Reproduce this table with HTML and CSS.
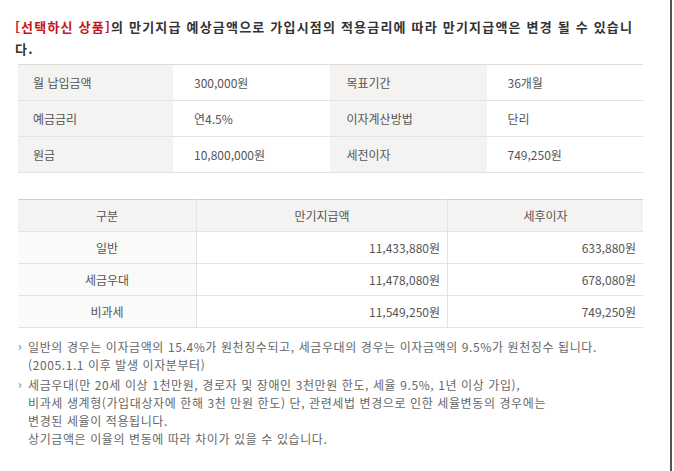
FILE: index.html
```html
<!DOCTYPE html>
<html lang="ko">
<head>
<meta charset="utf-8">
<link rel="stylesheet" href="styles.css">
</head>
<body>
<div class="frame">
  <p class="intro"><span class="hl">[선택하신 상품]</span>의 만기지급 예상금액으로 가입시점의 적용금리에 따라 만기지급액은 변경 될 수 있습니다.</p>

  <table class="summary">
    <tr>
      <th>월 납입금액</th><td>300,000원</td>
      <th>목표기간</th><td>36개월</td>
    </tr>
    <tr>
      <th>예금금리</th><td>연4.5%</td>
      <th>이자계산방법</th><td>단리</td>
    </tr>
    <tr>
      <th>원금</th><td>10,800,000원</td>
      <th>세전이자</th><td>749,250원</td>
    </tr>
  </table>

  <table class="result">
    <thead>
      <tr><th class="c1">구분</th><th class="c2">만기지급액</th><th class="c3">세후이자</th></tr>
    </thead>
    <tbody>
      <tr><th>일반</th><td>11,433,880원</td><td>633,880원</td></tr>
      <tr><th>세금우대</th><td>11,478,080원</td><td>678,080원</td></tr>
      <tr><th>비과세</th><td>11,549,250원</td><td>749,250원</td></tr>
    </tbody>
  </table>

  <ul class="notes">
    <li>일반의 경우는 이자금액의 15.4%가 원천징수되고, 세금우대의 경우는 이자금액의 9.5%가 원천징수 됩니다.<br>(2005.1.1 이후 발생 이자분부터)</li>
    <li>세금우대(만 20세 이상 1천만원, 경로자 및 장애인 3천만원 한도, 세율 9.5%, 1년 이상 가입),<br>비과세 생계형(가입대상자에 한해 3천 만원 한도) 단, 관련세법 변경으로 인한 세율변동의 경우에는<br>변경된 세율이 적용됩니다.<br>상기금액은 이율의 변동에 따라 차이가 있을 수 있습니다.</li>
  </ul>
</div>
</body>
</html>
```

FILE: styles.css
```css
html, body {
  margin: 0;
  padding: 0;
  background: #fff;
}
body {
  font-family: "Noto Sans CJK KR", "Noto Sans", sans-serif;
  color: #555;
  font-size: 12px;
}
.frame {
  width: 672px;
  height: 471px;
  border-right: 2px solid #57524d;
  box-sizing: border-box;
  padding-top: 16px;
  overflow: hidden;
}
.intro {
  margin: 0 0 0 15px;
  width: 628px;
  font-size: 13px;
  font-weight: bold;
  line-height: 22px;
  color: #333;
  letter-spacing: 1.2px;
}
.hl {
  color: #c4161c;
}
table {
  border-collapse: collapse;
  margin-left: 18px;
  width: 625px;
  table-layout: fixed;
}
.summary {
  margin-top: 4px;
  border-top: 1px solid #dcdcdc;
  border-bottom: 1px solid #cfcfcf;
}
.summary th, .summary td {
  height: 35px;
  padding: 0;
  border-bottom: 1px solid #e3e3e3;
  font-weight: normal;
  text-align: left;
  color: #555;
}
.summary th {
  width: 155px;
  background: #f4f3f1;
  padding-left: 15px;
}
.summary td {
  padding-left: 21px;
  background: #fff;
}
.summary th:first-child { width: 140px; }
.summary th:nth-child(3) { width: 140px; padding-left: 17px; }

.result {
  margin-top: 26px;
  border-top: 1px solid #cfcfcf;
  border-bottom: 1px solid #dcdcdc;
}
.result th, .result td {
  height: 31px;
  padding: 0;
  border-bottom: 1px solid #e3e3e3;
  font-weight: normal;
  color: #555;
}
.result thead th {
  background: #f4f3f1;
  text-align: center;
  border-left: 1px solid #e3e3e3;
}
.result thead th.c1 { border-left: 0; width: 178px; }
.result thead th.c2 { width: 250px; }
.result tbody th {
  background: #fafaf9;
  text-align: center;
}
.result tbody td {
  text-align: right;
  padding-right: 7px;
  border-left: 1px solid #e3e3e3;
}
.notes {
  list-style: none;
  margin: 10px 0 0 0;
  padding: 0 0 0 28px;
  font-size: 12px;
  line-height: 18px;
  color: #666;
  letter-spacing: 0.6px;
}
.notes li {
  position: relative;
  margin-bottom: 2px;
}
.notes li::before {
  content: "›";
  position: absolute;
  left: -10px;
  top: -1px;
  color: #777;
}
```
